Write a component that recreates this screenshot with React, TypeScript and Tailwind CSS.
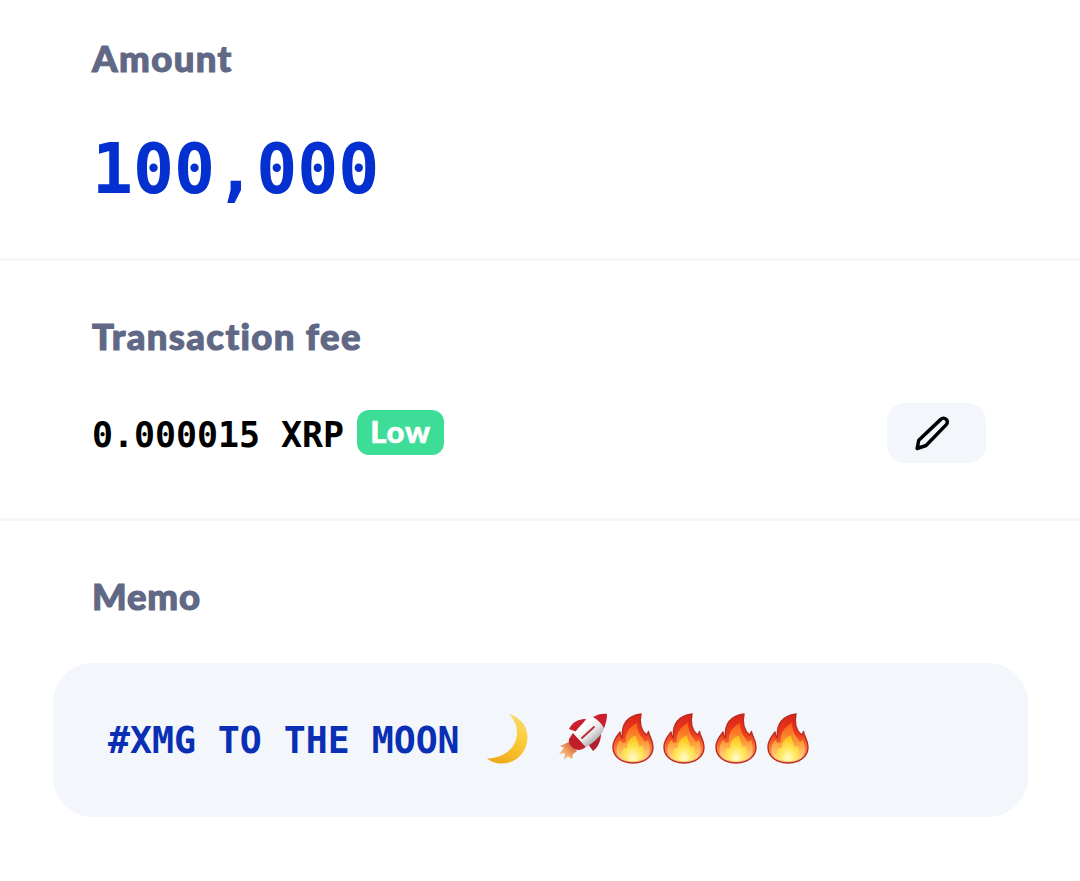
import type { ReactNode } from "react"

function Label({ children, className = "" }: { children: ReactNode; className?: string }) {
    return (
        <h2
            className={`font-['Lato',sans-serif] text-[36.5px] leading-[42px] font-black text-[#606885] [-webkit-text-stroke:1.1px_#606885] ${className}`}
        >
            {children}
        </h2>
    )
}

function PencilIcon() {
    return (
        <svg
            viewBox="0 0 24 24"
            className="h-[38px] w-[38px]"
            fill="none"
            stroke="#000"
            strokeWidth="2.2"
            strokeLinecap="round"
            strokeLinejoin="round"
            aria-hidden="true"
        >
            <path d="M16.9 3.4a2.3 2.3 0 0 1 3.5 3.3L7.6 19.9 2 21.8 3 16.6z" />
        </svg>
    )
}

function MoonIcon() {
    return (
        <svg viewBox="0 0 44 52" className="h-[52px] w-[44px] shrink-0" role="img" aria-label="🌙">
            <defs>
                <linearGradient id="moon" x1="0.9" y1="0" x2="0.4" y2="1">
                    <stop offset="0" stopColor="#fbdc6c" />
                    <stop offset="0.5" stopColor="#fcc936" />
                    <stop offset="1" stopColor="#f0ab1c" />
                </linearGradient>
            </defs>
            <path
                d="M23 1C33 4 41.500 12 41.500 24C41.500 39 30 50.500 16 50.500C10 50.500 5 49 1 45.500C19 45 31 34 31 20C31 12 28 6 23 1Z"
                fill="url(#moon)"
            />
        </svg>
    )
}

function RocketIcon() {
    return (
        <svg viewBox="0 0 50 50" className="h-[50px] w-[50px] shrink-0" role="img" aria-label="🚀">
            <defs>
                <linearGradient id="rocketBody" x1="0.3" y1="0.3" x2="0.75" y2="0.8">
                    <stop offset="0" stopColor="#ffffff" />
                    <stop offset="0.5" stopColor="#e8e8ea" />
                    <stop offset="1" stopColor="#a3a5a9" />
                </linearGradient>
                <linearGradient id="rocketFlame" x1="1" y1="0" x2="0" y2="1">
                    <stop offset="0" stopColor="#b8472a" />
                    <stop offset="0.5" stopColor="#f09a5e" />
                    <stop offset="1" stopColor="#fbd0a4" />
                </linearGradient>
            </defs>
            <path d="M11 29L2 33L6 35L1 41L7 40L6 47L10 43L14 46L15 41L19 38Z" fill="url(#rocketFlame)" />
            <path d="M28 6C22 6 15 8 11 16L19 19Z" fill="#c8202c" />
            <path d="M43 20C43 28 40 34 35 38L30 31Z" fill="#b01f2b" />
            <path d="M15 20L28 34C24 37 20 38 17 36C13 34 10 30 11 26Z" fill="#bf1e2a" />
            <path d="M36 4L47 14C43 23 37 29 28 34L16 21C21 13 27 7 36 4Z" fill="url(#rocketBody)" />
            <path d="M35 4C40 1 45 0 49 1C49 6 48 10 46 15C43 10 40 7 35 4Z" fill="#cc1f2d" />
            <path d="M36 14L24 25" stroke="#bd2c35" strokeWidth="1.9" strokeLinecap="round" />
        </svg>
    )
}

function FireIcon() {
    return (
        <svg viewBox="0 0 42 52" className="h-[52px] w-[42px] shrink-0" role="img" aria-label="🔥">
            <defs>
                <linearGradient id="flameOuter" x1="0" y1="0" x2="0" y2="1">
                    <stop offset="0" stopColor="#d9241a" />
                    <stop offset="0.4" stopColor="#ea3b1c" />
                    <stop offset="0.75" stopColor="#f9843c" />
                    <stop offset="1" stopColor="#fbc37a" />
                </linearGradient>
                <linearGradient id="flameMiddle" x1="0" y1="0" x2="0" y2="1">
                    <stop offset="0" stopColor="#fb5a18" />
                    <stop offset="0.5" stopColor="#fd9a35" />
                    <stop offset="1" stopColor="#ffe09a" />
                </linearGradient>
                <radialGradient id="flameInner" cx="0.5" cy="0.85" r="0.75">
                    <stop offset="0" stopColor="#fffccc" />
                    <stop offset="0.5" stopColor="#ffe658" />
                    <stop offset="1" stopColor="#fdc51f" />
                </radialGradient>
            </defs>
            <path
                d="M29 1C16 3 9 11 10.500 25C8.500 23 8 21 8 19C5 23 1 27 1 34C1 44 10 50 21 50C32 50 41 44 41 34C41 27 37 23 36.500 18.500C36 20 35.500 21 34.500 22C29 17 27 10 29 1Z"
                fill="url(#flameOuter)"
                stroke="#bd2a22"
                strokeWidth="1.4"
                strokeLinejoin="round"
            />
            <path
                d="M25 10C17 14 13 20 14 29L11 30L8 27C4 32 3 39 7 44C12 49.500 30 49.500 35 44C39 39 38 32 36 27L33 29C30 24 25 20 25 10Z"
                fill="url(#flameMiddle)"
            />
            <path
                d="M24 23C18 24 15 29 15 35L12 35C8 40 9 45 14 47C19 49 26 49 30 46C34 43 33 37 30 33L27 34C27 30 25 28 24 23Z"
                fill="url(#flameInner)"
            />
        </svg>
    )
}

export default function App() {
    return (
        <div className="h-[881px] w-[1080px] overflow-hidden bg-white">
            <section className="h-[261px] border-b-[3px] border-[#f6f6f8] px-[92px] pt-[37px]">
                <Label className="tracking-[1.4px]">Amount</Label>
                <p className="mt-[50px] origin-top scale-y-[1.02] font-['DejaVu_Sans_Mono',monospace] text-[68.2px] leading-[80px] font-bold text-[#0430cf]">
                    100,000
                </p>
            </section>

            <section className="h-[260px] border-b-[3px] border-[#f6f6f8] pt-[54px] pr-[94px] pl-[92px]">
                <Label className="tracking-[1.35px]">Transaction fee</Label>
                <div className="mt-[46px] flex h-[60px] items-center">
                    <span className="pt-[4px] font-['DejaVu_Sans_Mono',monospace] text-[34.9px] leading-[44px] font-bold whitespace-pre text-black">
                        0.000015 XRP
                    </span>
                    <span className="mb-[2px] ml-[13px] flex h-[45px] w-[87px] items-center justify-center rounded-[12px] bg-[#3ddc97] pb-[2px] font-['Lato',sans-serif] text-[31px] font-black tracking-[0.8px] text-white [-webkit-text-stroke:0.6px_white]">
                        Low
                    </span>
                    <button
                        type="button"
                        aria-label="Edit fee"
                        className="ml-auto flex h-[60px] w-[99px] items-center rounded-[18px] bg-[#f3f6fb] pl-[27px]"
                    >
                        <PencilIcon />
                    </button>
                </div>
            </section>

            <section className="px-[53px] pt-[54px]">
                <Label className="pl-[39px] tracking-[0.8px]">Memo</Label>
                <div className="mt-[46px] flex h-[154px] w-[975px] items-center rounded-[40px] bg-[#f3f6fb] pl-[55px]">
                    <span className="pt-[2px] font-['DejaVu_Sans_Mono',monospace] text-[36.5px] leading-[44px] font-bold text-[#0a2fb5]">
                        #XMG TO THE MOON
                    </span>
                    <span className="mb-[3px] ml-[26px] flex items-start">
                        <MoonIcon />
                        <span className="ml-[28px] flex">
                            <RocketIcon />
                        </span>
                        <span className="ml-[4px] flex gap-[9.7px]">
                            <FireIcon />
                            <FireIcon />
                            <FireIcon />
                            <FireIcon />
                        </span>
                    </span>
                </div>
            </section>
        </div>
    )
}
